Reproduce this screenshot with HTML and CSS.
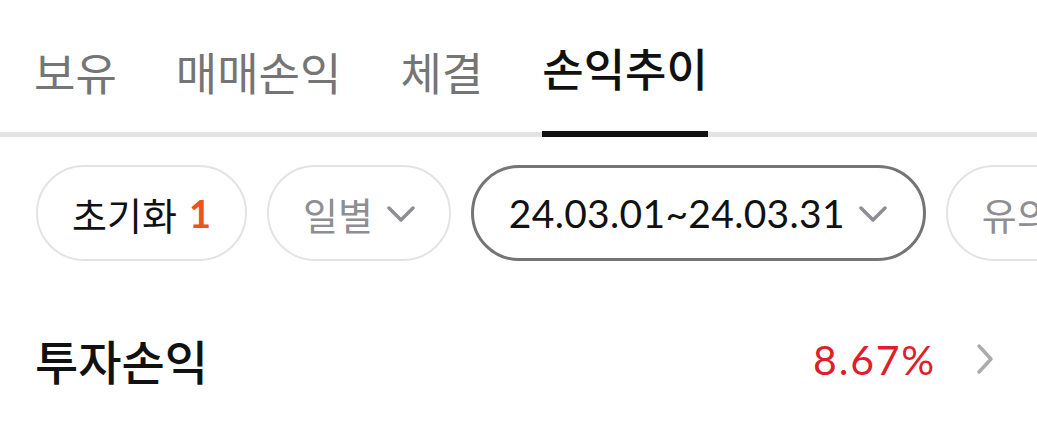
FILE: index.html
```html
<!DOCTYPE html>
<html>
<head>
	<title>손익추이</title>
	<meta charset="UTF-8">
	<link rel="stylesheet" href="styles.css">
</head>
<body>
	<div class="tabs">
		<a class="tab" href="#">보유</a>
		<a class="tab" href="#">매매손익</a>
		<a class="tab" href="#">체결</a>
		<a class="tab active" href="#">손익추이</a>
	</div>

	<div class="filters">
		<a class="pill" href="#">초기화 <span class="count">1</span></a>
		<a class="pill muted" href="#">일별
			<svg class="arrow" width="28" height="16" viewBox="0 0 28 16"><path d="M2 2 L14 14 L26 2" fill="none" stroke="#8e8e93" stroke-width="3.5" stroke-linecap="round" stroke-linejoin="round"/></svg>
		</a>
		<a class="pill selected" href="#">24.03.01~24.03.31
			<svg class="arrow" width="28" height="16" viewBox="0 0 28 16"><path d="M2 2 L14 14 L26 2" fill="none" stroke="#8e8e93" stroke-width="3.5" stroke-linecap="round" stroke-linejoin="round"/></svg>
		</a>
		<a class="pill muted" href="#">유의사항</a>
	</div>

	<div class="summary">
		<h2 class="title">투자손익</h2>
		<a class="rate" href="#">
			<span class="value">8.67%</span>
			<svg width="18" height="32" viewBox="0 0 18 32"><path d="M3 3 L15 16 L3 29" fill="none" stroke="#aaaaaf" stroke-width="3.5" stroke-linecap="round" stroke-linejoin="round"/></svg>
		</a>
	</div>
</body>
</html>
```

FILE: styles.css
```css
*{
	margin: 0;
	padding: 0;
	box-sizing: border-box;
}
a{
	text-decoration: none;
	color: inherit;
}
body{
	width: 1037px;
	height: 421px;
	overflow: hidden;
	background: #fff;
	font-family: Lato, "Noto Sans CJK KR", sans-serif;
	color: #111;
}
.tabs{
	display: flex;
	gap: 59px;
	padding: 0 34px;
	height: 137px;
	border-bottom: 5px solid #e3e3e5;
}
.tab{
	display: flex;
	align-items: center;
	padding-top: 16px;
	font-size: 45px;
	color: #757575;
	line-height: 1;
}
.tab.active{
	color: #111;
	font-weight: 500;
	border-bottom: 6px solid #111;
	margin-bottom: -5px;
	padding-top: 10px;
}
.filters{
	display: flex;
	gap: 20px;
	padding: 28px 0 0 36px;
	white-space: nowrap;
	overflow: hidden;
}
.pill{
	flex-shrink: 0;
	display: flex;
	align-items: center;
	gap: 14px;
	height: 96px;
	padding: 0 34px;
	border: 2px solid #e3e3e5;
	border-radius: 48px;
	font-size: 38px;
	color: #111;
}
.pill .count{
	color: #ea5420;
	font-weight: 700;
	margin-left: -2px;
}
.pill.muted{
	color: #8e8e93;
}
.pill.selected{
	border: 3px solid #757575;
	padding: 0 36px 0 35px;
	font-size: 39px;
	letter-spacing: 0.3px;
}
.arrow{
	margin-top: 2px;
}
.summary{
	display: flex;
	align-items: center;
	justify-content: space-between;
	padding: 0 43px 0 35px;
	height: 196px;
}
.title{
	font-size: 47px;
	font-weight: 500;
	color: #111;
}
.rate{
	display: flex;
	align-items: center;
	gap: 40px;
}
.rate .value{
	font-size: 41px;
	letter-spacing: 1.8px;
	color: #de1f2b;
}
```
